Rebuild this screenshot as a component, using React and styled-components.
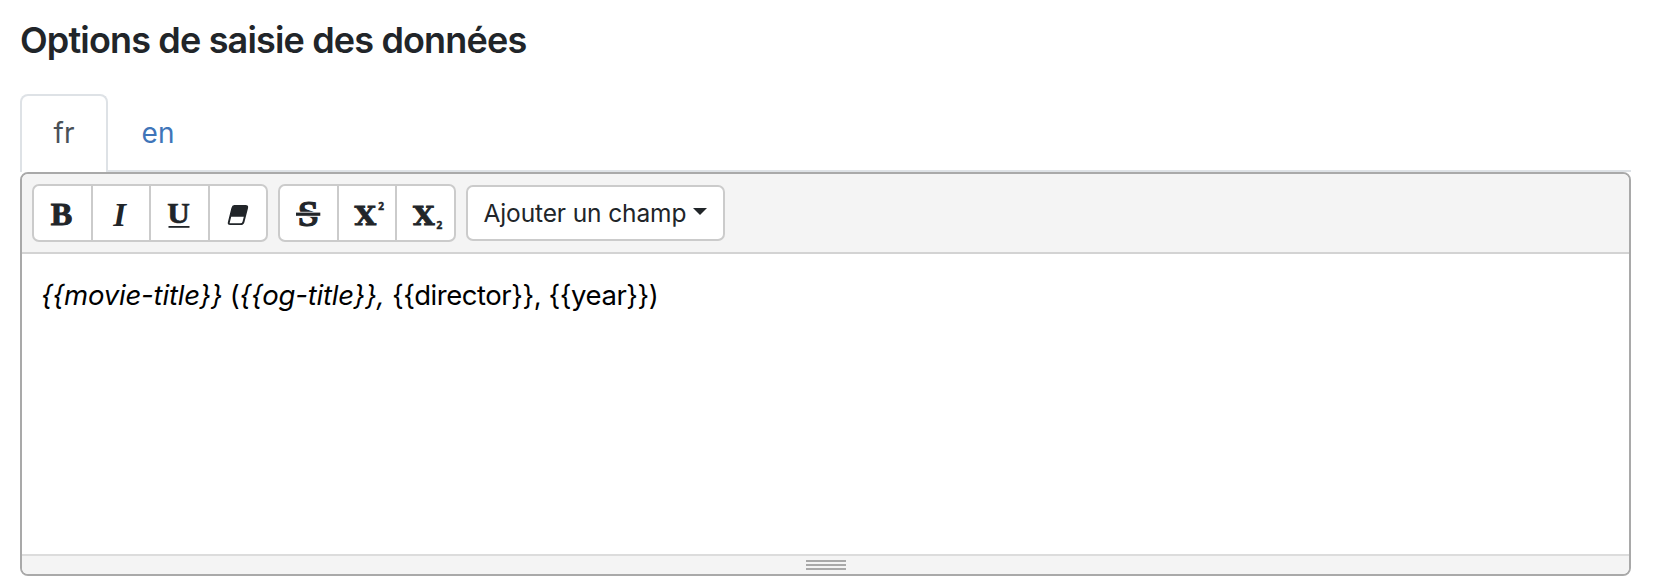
import React from 'react';
import styled, { createGlobalStyle } from 'styled-components';

const GlobalStyle = createGlobalStyle`
  * { box-sizing: border-box; }
  body {
    margin: 0;
    background: #fff;
    color: #212529;
    font-family: Inter, "Liberation Sans", sans-serif;
  }
`;

const Page = styled.main`
  width: 1660px;
  height: 588px;
  padding: 16px 29px 12px 20px;
  display: flex;
  flex-direction: column;
`;

const Title = styled.h2`
  margin: 0 0 30px;
  height: 48px;
  line-height: 48px;
  font-size: 36px;
  font-weight: 600;
  letter-spacing: -0.84px;
  white-space: nowrap;
`;

const Tabs = styled.nav`
  display: flex;
  height: 78px;
  border-bottom: 2px solid #dee2e6;
`;

const Tab = styled.a`
  width: ${(p) => (p.$active ? 88 : 100)}px;
  height: 78px;
  padding-top: 17px;
  text-align: center;
  line-height: 40px;
  font-size: 28px;
  color: ${(p) => (p.$active ? '#495057' : '#3f75b9')};
  background: ${(p) => (p.$active ? '#fff' : 'transparent')};
  border: 2px solid ${(p) => (p.$active ? '#dee2e6' : 'transparent')};
  border-bottom: 0;
  border-radius: 8px 8px 0 0;
`;

const Editor = styled.section`
  height: 404px;
  display: flex;
  flex-direction: column;
  border: 2px solid #a9a9a9;
  border-radius: 8px;
  overflow: hidden;
`;

const Toolbar = styled.div`
  height: 80px;
  padding: 10px;
  display: flex;
  gap: 10px;
  background: #f4f4f4;
  border-bottom: 2px solid #d3d3d3;
`;

const Group = styled.div`
  display: flex;
`;

const ToolButton = styled.button`
  width: 60.5px;
  height: 58px;
  padding: 0;
  display: flex;
  align-items: center;
  justify-content: center;
  background: #fff;
  border: 2px solid #cbcbcb;
  &:first-child { border-radius: 7px 0 0 7px; }
  &:last-child { border-radius: 0 7px 7px 0; }
  & + & { margin-left: -2px; }
`;

const Glyph = styled.svg`
  flex: none;
  width: 56px;
  height: 54px;
  fill: #212529;
`;

const Mark = styled.text`
  font-family: ${(p) => p.$face || '"Liberation Serif"'}, serif;
  font-size: ${(p) => p.$size || 33}px;
  font-weight: 700;
  font-style: ${(p) => (p.$italic ? 'italic' : 'normal')};
  stroke: #212529;
  stroke-width: ${(p) => p.$stroke || 0};
`;

const FieldMenu = styled.button`
  width: 259px;
  height: 56px;
  margin-top: 1px;
  padding: 0 16px;
  display: flex;
  align-items: center;
  justify-content: space-between;
  background: #fff;
  border: 2px solid #cbcbcb;
  border-radius: 7px;
  color: #212529;
  font: 400 24.5px/36px Inter, sans-serif;
  letter-spacing: -0.12px;
  white-space: nowrap;
`;

const Caret = styled.span`
  margin-bottom: 3px;
  border: 7px solid transparent;
  border-top-color: #212529;
  border-bottom: 0;
`;

const Content = styled.div`
  flex: 1;
  padding: 20px 19px;
  color: #000;
  font-size: 27.5px;
  line-height: 42px;
  letter-spacing: -0.45px;
  white-space: pre;
`;

const Italic = styled.em`
  letter-spacing: -0.2px;
`;

const StatusBar = styled.div`
  height: 20px;
  padding-top: 4px;
  display: flex;
  flex-direction: column;
  align-items: center;
  gap: 2px;
  background: #f4f4f4;
  border-top: 2px solid #dcdcdc;
`;

const Grip = styled.span`
  width: 40px;
  height: 2px;
  background: #a9a9a9;
`;

function App() {
  return (
    <>
      <GlobalStyle />
      <Page>
        <Title>Options de saisie des données</Title>
        <Tabs>
          <Tab $active>fr</Tab>
          <Tab>en</Tab>
        </Tabs>
        <Editor>
          <Toolbar>
            <Group>
              <ToolButton>
                <Glyph viewBox="0 0 56 54">
                  <Mark x="16.8" y="39.3" $size={32} $stroke={1} textLength="21.5" lengthAdjust="spacingAndGlyphs">B</Mark>
                </Glyph>
              </ToolButton>
              <ToolButton>
                <Glyph viewBox="0 0 56 54">
                  <Mark x="20.3" y="39.7" $italic>I</Mark>
                </Glyph>
              </ToolButton>
              <ToolButton>
                <Glyph viewBox="0 0 56 54">
                  <Mark x="16.2" y="37.3" $size={30} $stroke={0.6} textLength="22.6" lengthAdjust="spacingAndGlyphs">U</Mark>
                  <rect x="17.5" y="40" width="21" height="1.8" />
                </Glyph>
              </ToolButton>
              <ToolButton>
                <Glyph viewBox="0 0 56 54">
                  <path
                    fillRule="evenodd"
                    d="M24.3 19H35.5Q38.8 19 38 22.2L34.4 36.2Q33.6 39 30.8 39H20.2Q17.1 39 17.9 36L21.4 21.9Q22.1 19 24.3 19ZM21.2 30.8L19.6 37.3H30.3Q32.1 37.3 32.6 35.4L33.8 30.8Z"
                  />
                </Glyph>
              </ToolButton>
            </Group>
            <Group>
              <ToolButton>
                <Glyph viewBox="0 0 56 54">
                  <Mark x="18" y="40.3" $size={35.5} $stroke={1.1} textLength="20.5" lengthAdjust="spacingAndGlyphs">S</Mark>
                  <rect x="14" y="25.8" width="28" height="5" fill="#fff" />
                  <rect x="16" y="26.6" width="24.3" height="3.2" />
                </Glyph>
              </ToolButton>
              <ToolButton>
                <Glyph viewBox="0 0 56 54">
                  <Mark x="15.5" y="39.4" $face='"DejaVu Serif"' $size={26.8} $stroke={0.8} textLength="21.6" lengthAdjust="spacingAndGlyphs">X</Mark>
                  <Mark x="39.2" y="24.2" $face='"Open Sans"' $size={10} $stroke={0.5}>2</Mark>
                </Glyph>
              </ToolButton>
              <ToolButton>
                <Glyph viewBox="0 0 56 54">
                  <Mark x="16" y="39.4" $face='"DejaVu Serif"' $size={26.8} $stroke={0.8} textLength="21.6" lengthAdjust="spacingAndGlyphs">X</Mark>
                  <Mark x="39.5" y="43.2" $face='"Open Sans"' $size={10} $stroke={0.5}>2</Mark>
                </Glyph>
              </ToolButton>
            </Group>
            <FieldMenu>
              Ajouter un champ
              <Caret />
            </FieldMenu>
          </Toolbar>
          <Content>
            <Italic>{'{{movie-title}}'}</Italic>
            {' ('}
            <Italic>{'{{og-title}}, '}</Italic>
            {'{{director}}, {{year}})'}
          </Content>
          <StatusBar>
            <Grip />
            <Grip />
            <Grip />
          </StatusBar>
        </Editor>
      </Page>
    </>
  );
}

export default App;
